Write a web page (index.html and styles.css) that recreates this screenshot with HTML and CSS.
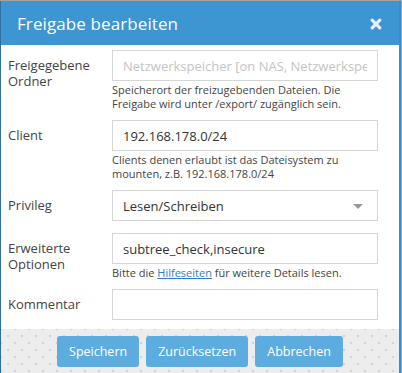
FILE: index.html
```html
<!DOCTYPE html>
<html lang="de">
<head>
  <meta charset="UTF-8" />
  <meta name="viewport" content="width=device-width, initial-scale=1.0"/>
  <title>Freigabe bearbeiten</title>
  <link rel="stylesheet" href="styles.css">
</head>
<body>
  <div class="dialog">
    <div class="dialog-header">
      <h2 class="dialog-title">Freigabe bearbeiten</h2>
      <span class="dialog-close">
        <svg width="12" height="12" viewBox="0 0 12 12">
          <path d="M2.2 2.2 L9.8 9.8 M9.8 2.2 L2.2 9.8" stroke="currentColor" stroke-width="3.2" stroke-linecap="round"/>
        </svg>
      </span>
    </div>

    <form class="dialog-body">
      <div class="form-row">
        <label class="form-label">Freigegebene Ordner</label>
        <div class="form-field">
          <input class="form-input" type="text" placeholder="Netzwerkspeicher [on NAS, Netzwerkspeicher]">
          <p class="help-text">Speicherort der freizugebenden Dateien. Die Freigabe wird unter /export/ zugänglich sein.</p>
        </div>
      </div>

      <div class="form-row">
        <label class="form-label">Client</label>
        <div class="form-field">
          <input class="form-input" type="text" value="192.168.178.0/24">
          <p class="help-text">Clients denen erlaubt ist das Dateisystem zu mounten, z.B. 192.168.178.0/24</p>
        </div>
      </div>

      <div class="form-row form-row-plain">
        <label class="form-label">Privileg</label>
        <div class="form-field">
          <div class="select-wrap">
            <select class="form-input form-select">
              <option>Lesen/Schreiben</option>
              <option>Nur Lesen</option>
            </select>
          </div>
        </div>
      </div>

      <div class="form-row">
        <label class="form-label">Erweiterte Optionen</label>
        <div class="form-field">
          <input class="form-input" type="text" value="subtree_check,insecure">
          <p class="help-text">Bitte die <a href="#">Hilfeseiten</a> für weitere Details lesen.</p>
        </div>
      </div>

      <div class="form-row form-row-plain">
        <label class="form-label">Kommentar</label>
        <div class="form-field">
          <input class="form-input" type="text">
        </div>
      </div>
    </form>

    <div class="dialog-footer">
      <button class="btn">Speichern</button>
      <button class="btn">Zurücksetzen</button>
      <button class="btn">Abbrechen</button>
    </div>
  </div>
</body>
</html>
```

FILE: styles.css
```css
:root {
  --header-bg: #3d95d1;
  --btn-bg: #5dacdf;
  --border-color: #d6d6d6;
  --text-color: #444444;
  --link-color: #2a7fc3;
  --footer-bg: #ededed;
}
html, body {
  height: 100%;
}
body {
  font-family: 'Open Sans', 'Liberation Sans', Arial, sans-serif;
  margin: 0;
  background-color: #a3a3a3;
  color: var(--text-color);
  overflow: hidden;
}
.dialog {
  margin: 1px 1px 0 0;
  height: calc(100% - 1px);
  display: flex;
  flex-direction: column;
  background-color: #ffffff;
  border-left: 1px solid #336f9c;
  border-right: 2px solid #3a8dcb;
}
.dialog-header {
  height: 44px;
  flex: none;
  background-color: var(--header-bg);
  display: flex;
  align-items: center;
  justify-content: space-between;
  padding: 0 17px 0 16px;
}
.dialog-title {
  margin: 0;
  font-size: 17px;
  font-weight: normal;
  color: #ffffff;
  letter-spacing: 0.1px;
}
.dialog-close {
  display: flex;
  color: #e4eff8;
  margin-top: 1px;
}
.dialog-body {
  padding: 5px 21px 9px 0;
}
.form-row {
  display: flex;
  margin-bottom: 9px;
}
.form-row-plain {
  margin-bottom: 12px;
}
.form-row:last-child {
  margin-bottom: 0;
}
.form-label {
  width: 104px;
  flex: none;
  padding: 7px 0 0 7px;
  font-size: 13px;
  line-height: 16px;
}
.form-field {
  flex: 1;
  min-width: 0;
}
.form-input {
  display: block;
  width: 100%;
  box-sizing: border-box;
  height: 31px;
  margin: 0;
  padding: 0 10px;
  border: 1px solid var(--border-color);
  border-radius: 0;
  background-color: #ffffff;
  font-family: inherit;
  font-size: 13px;
  color: #333333;
  outline: none;
}
.form-input::placeholder {
  color: #c4c4c4;
}
.select-wrap {
  position: relative;
}
.form-select {
  appearance: none;
  -webkit-appearance: none;
}
.select-wrap::after {
  content: "";
  position: absolute;
  right: 15px;
  top: 14px;
  border-left: 5px solid transparent;
  border-right: 5px solid transparent;
  border-top: 5px solid #9a9a9a;
}
.help-text {
  margin: 2px 0 0 0;
  font-size: 11px;
  line-height: 14px;
  color: var(--text-color);
}
.help-text a {
  color: var(--link-color);
}
.dialog-footer {
  flex: 1;
  padding-top: 7px;
  display: flex;
  align-items: flex-start;
  justify-content: center;
  gap: 7px;
  background-color: var(--footer-bg);
  background-image:
    radial-gradient(circle, #d2d2d2 0.8px, transparent 1.2px),
    radial-gradient(circle, #d2d2d2 0.8px, transparent 1.2px);
  background-size: 14px 14px;
  background-position: 0 0, 7px 7px;
}
.btn {
  height: 31px;
  padding: 0 12px;
  border: none;
  border-radius: 3px;
  background-color: var(--btn-bg);
  color: #ffffff;
  font-family: inherit;
  font-size: 12.5px;
  cursor: pointer;
}
```
